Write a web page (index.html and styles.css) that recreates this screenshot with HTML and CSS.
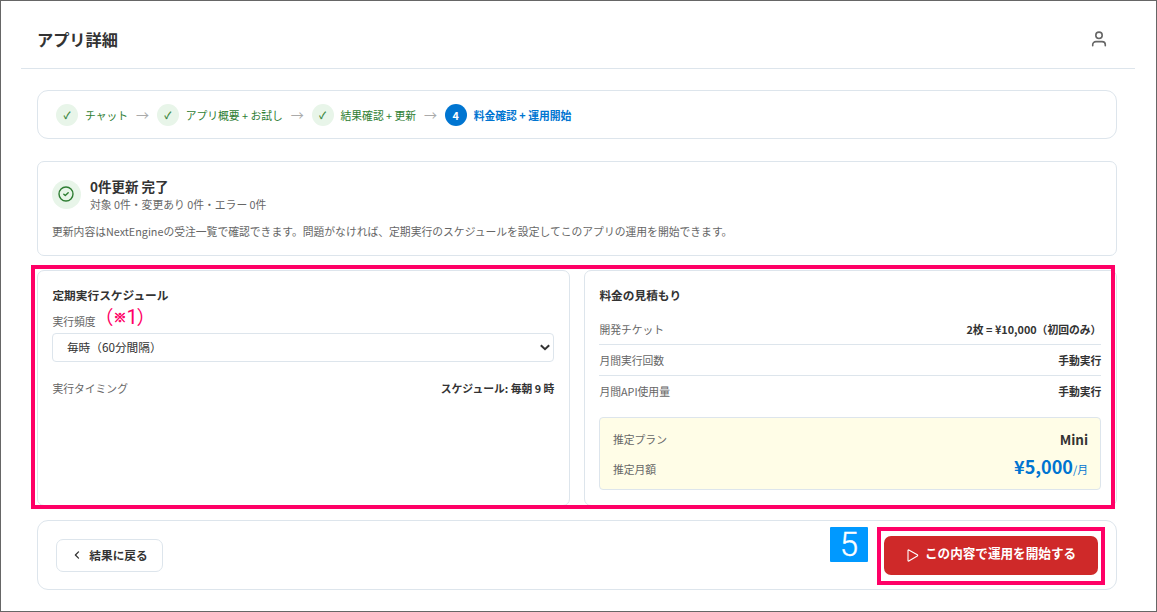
FILE: index.html
```html
<!DOCTYPE html>
<html lang="ja">
<head>
<meta charset="utf-8">
<title>アプリ詳細</title>
<link rel="stylesheet" href="styles.css">
</head>
<body>
<div class="page">
  <header class="header">
    <h1 class="header-title">アプリ詳細</h1>
    <svg class="user-icon" width="18" height="18" viewBox="0 0 18 18" fill="none" stroke="#666" stroke-width="1.6" stroke-linecap="round"><circle cx="9" cy="5.3" r="3.2"/><path d="M2.7 15.800v-1a3.200 3.200 0 0 1 3.200-3.200h6.200a3.200 3.200 0 0 1 3.200 3.200v1"/></svg>
  </header>
  <main class="main">
    <nav class="card steps">
      <div class="step"><span class="dot">✓</span><span>チャット</span></div>
      <span class="arrow">→</span>
      <div class="step"><span class="dot">✓</span><span>アプリ概要 + お試し</span></div>
      <span class="arrow">→</span>
      <div class="step"><span class="dot">✓</span><span>結果確認 + 更新</span></div>
      <span class="arrow">→</span>
      <div class="step current"><span class="dot">4</span><span>料金確認 + 運用開始</span></div>
    </nav>
    <section class="card summary">
      <div class="summary-head">
        <span class="badge"><svg width="18" height="18" viewBox="0 0 18 18" fill="none" stroke="#2e7d32" stroke-width="1.4" stroke-linecap="round" stroke-linejoin="round"><circle cx="9" cy="9" r="7"/><path d="M6.800 9.200l1.500 1.400 2.900-2.800"/></svg></span>
        <div>
          <h2 class="summary-title">0件更新 完了</h2>
          <p class="summary-sub">対象 0件・変更あり 0件・エラー 0件</p>
        </div>
      </div>
      <p class="summary-text">更新内容はNextEngineの受注一覧で確認できます。問題がなければ、定期実行のスケジュールを設定してこのアプリの運用を開始できます。</p>
    </section>
    <div class="columns">
      <section class="card panel">
        <h3 class="panel-title">定期実行スケジュール</h3>
        <label class="label" for="freq">実行頻度</label>
        <div class="select-wrap">
          <select class="select" id="freq"><option>毎時（60分間隔）</option></select>
          <svg class="chevron" width="10" height="7" viewBox="0 0 10 7" fill="none" stroke="#333" stroke-width="2"><path d="M.8 1.200L5 5.200l4.200-4"/></svg>
        </div>
        <div class="timing"><span>実行タイミング</span><b>スケジュール: 毎朝 9 時</b></div>
      </section>
      <section class="card panel">
        <h3 class="panel-title">料金の見積もり</h3>
        <div class="rows">
          <div class="row"><span>開発チケット</span><b>2枚 = ¥10,000（初回のみ）</b></div>
          <div class="row"><span>月間実行回数</span><b>手動実行</b></div>
          <div class="row"><span>月間API使用量</span><b>手動実行</b></div>
        </div>
        <div class="estimate">
          <div class="estimate-row"><span>推定プラン</span><b class="plan">Mini</b></div>
          <div class="estimate-row"><span>推定月額</span><span class="price"><b>¥5,000</b>/月</span></div>
        </div>
      </section>
      <div class="highlight highlight-columns"></div>
      <span class="note">（<span class="note-mark">※</span><span class="note-number">1</span>）</span>
    </div>
    <footer class="card actions">
      <button class="back"><svg width="6" height="8" viewBox="0 0 6 8" fill="none" stroke="#333" stroke-width="1.3" stroke-linecap="round" stroke-linejoin="round"><path d="M4.500 .9L1.400 4l3.100 3.100"/></svg><span>結果に戻る</span></button>
      <button class="start"><svg width="12" height="13" viewBox="0 0 12 13" fill="none" stroke="#fff" stroke-width="1.1" stroke-linejoin="round"><path d="M1 1.500Q1 .7 1.800 1l8.500 4.800q.8.6 0 1.200L1.800 12Q1 12.300 1 11.500z"/></svg><span>この内容で運用を開始する</span></button>
      <div class="highlight highlight-start"></div>
      <span class="marker">5</span>
    </footer>
  </main>
</div>
</body>
</html>
```
FILE: styles.css
```css
* { box-sizing: border-box; }
body {
  margin: 0;
  background: #fff;
  color: #333;
  font-family: "Noto Sans CJK JP", sans-serif;
  font-size: 10.8px;
  line-height: 16px;
}
h1, h2, h3, p { margin: 0; }
.page {
  width: 1157px;
  height: 612px;
  border: 1px solid #666;
  padding: 0 20px;
  overflow: hidden;
}
.header {
  display: flex;
  align-items: center;
  justify-content: space-between;
  width: 1114px;
  height: 68px;
  padding: 8px 27px 0 16px;
  border-bottom: 1px solid #dde5ec;
}
.header-title { font-size: 16.2px; line-height: 24px; }
.main {
  width: 1096px;
  padding: 21px 0 0 16px;
}
.card {
  border: 1px solid #dde5ec;
  border-radius: 7px;
  background: #fff;
}
.steps {
  display: flex;
  align-items: center;
  height: 49px;
  padding: 0 18px;
  border-radius: 11px;
  color: #2e7d32;
}
.step { display: flex; align-items: center; gap: 7px; white-space: nowrap; }
.step > span:last-child { padding-top: 1px; }
.dot {
  display: flex;
  align-items: center;
  justify-content: center;
  width: 22px;
  height: 22px;
  border-radius: 50%;
  background: #e8f5e9;
  font-size: 9.6px;
  -webkit-text-stroke: .25px currentColor;
}
.arrow { width: 28.6px; text-align: center; font-size: 13px; color: #aaa; }
.current { color: #0075d1; font-weight: 700; }
.current .dot {
  background: #0075d1;
  color: #fff;
  font-size: 10.8px;
  -webkit-text-stroke: 0;
}
.summary { height: 95px; margin-top: 22px; padding: 15px 14px; }
.summary-head { display: flex; align-items: center; gap: 9px; height: 34px; }
.badge {
  display: flex;
  align-items: center;
  justify-content: center;
  width: 29px;
  height: 29px;
  padding-right: 1px;
  border-radius: 50%;
  background: #e8f5e9;
}
.summary-title { font-size: 13.5px; line-height: 19px; }
.summary-sub, .summary-text { color: #666; }
.summary-text { margin-top: 12px; }
.columns {
  position: relative;
  display: grid;
  grid-template-columns: 1fr 1fr;
  gap: 14px;
  height: 236px;
  margin-top: 14px;
}
.panel { padding: 15px 14.6px 0 14.4px; }
.panel-title { font-size: 11.7px; line-height: 18px; }
.label { display: block; margin-top: 9px; color: #666; line-height: 16px; }
.select-wrap { display: flex; align-items: center; margin-top: 4px; }
.select {
  appearance: none;
  width: 100%;
  height: 29px;
  padding: 0 13.5px 2px;
  border: 1px solid #dde5ec;
  border-radius: 4px;
  background: #fff;
  color: #333;
  font: 11.7px "Noto Sans CJK JP", sans-serif;
}
.chevron { flex: none; margin-left: -14px; margin-right: 4px; }
.timing, .row, .estimate-row {
  display: flex;
  align-items: center;
  justify-content: space-between;
  color: #666;
}
.timing { margin-top: 18px; }
.timing b, .row b, .plan { color: #333; }
.rows { margin-top: 10px; }
.row { height: 31px; border-bottom: 1px solid #dde5ec; }
.row:last-child { border-bottom: 0; padding-bottom: 1px; }
.estimate {
  height: 73px;
  margin-top: 10px;
  padding: 8px 12.4px 0 12.6px;
  border: 1px solid #dde5ec;
  border-radius: 4px;
  background: #fffde7;
}
.estimate-row { height: 26px; }
.estimate-row + .estimate-row { height: 30px; margin-top: 2px; }
.plan { font-size: 13.5px; }
.price { padding-bottom: 4px; color: #0075d1; line-height: 24px; }
.price b { font-size: 18px; }
.highlight { position: absolute; border: 4px solid #ff0066; }
.highlight-columns { left: -6px; top: -5px; width: 1084px; height: 244px; }
.note {
  position: absolute;
  left: 67px;
  top: 35px;
  display: flex;
  color: #ff0066;
  font-size: 19px;
  line-height: 24px;
  font-feature-settings: "halt";
}
.note-mark {
  width: 13px;
  font-size: 13px;
  -webkit-text-stroke: .6px currentColor;
}
.note-number {
  width: 10px;
  font-family: Roboto, sans-serif;
  font-size: 20px;
}
.actions {
  position: relative;
  display: flex;
  align-items: center;
  justify-content: space-between;
  height: 70px;
  margin-top: 14px;
  padding: 0 18px;
  border-radius: 11px;
}
.back, .start {
  display: flex;
  align-items: center;
  justify-content: center;
  font-family: inherit;
  font-weight: 700;
}
.back {
  gap: 9px;
  width: 107px;
  height: 33px;
  padding: 0 0 0 3px;
  border: 1px solid #dde5ec;
  border-radius: 7px;
  background: #fff;
  color: #333;
  font-size: 11.7px;
}
.back span { margin-top: -2px; }
.start {
  gap: 7px;
  width: 214px;
  height: 39px;
  padding: 0;
  border: 0;
  border-radius: 7px;
  background: #cf2929;
  color: #fff;
  font-size: 12.6px;
}
.start svg { margin: 0 -1px 0 1px; }
.start span { margin-top: -5px; }
.highlight-start { left: 839px; top: 6px; width: 228px; height: 58px; }
.marker {
  position: absolute;
  left: 792px;
  top: 6px;
  width: 38px;
  height: 35px;
  border-radius: 1px;
  background: #0099ff;
  color: #fff;
  font-family: Roboto, sans-serif;
  font-size: 33px;
  font-weight: 300;
  line-height: 35px;
  text-align: center;
  -webkit-text-stroke: .4px #fff;
}
```
